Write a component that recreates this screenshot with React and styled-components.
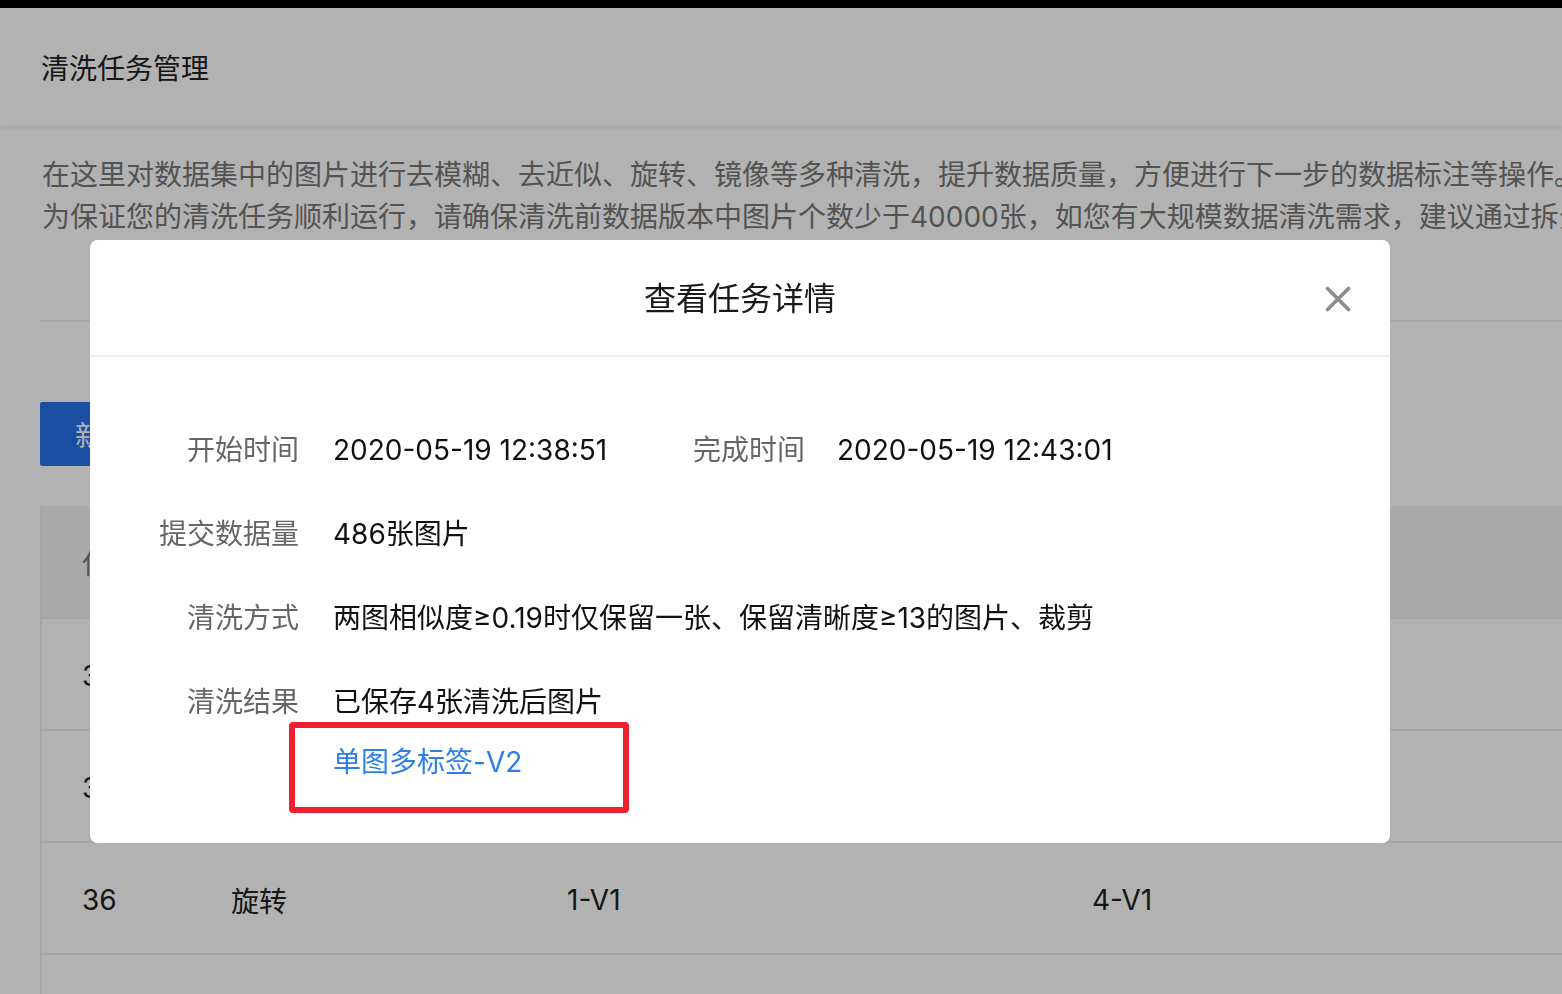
import React from "react";
import styled, { createGlobalStyle } from "styled-components";

const GlobalStyle = createGlobalStyle`
  html, body {
    margin: 0;
    padding: 0;
    background: #fff;
    overflow: hidden;
  }
  body {
    font-family: Inter, "Noto Sans CJK SC", sans-serif;
  }
  * {
    box-sizing: border-box;
  }
`;

const Page = styled.div`
  width: 1562px;
  height: 994px;
  overflow: hidden;
  background: #fff;
`;

const TopBar = styled.div`
  height: 8px;
  background: #000;
`;

const Header = styled.div`
  height: 118px;
  display: flex;
  align-items: center;
  padding-left: 41px;
  background: #fff;
  box-shadow: 0 2px 4px rgba(0, 0, 0, 0.08);
  font-size: 28px;
  color: #222;
`;

const Content = styled.div`
  padding-left: 40px;
`;

const Desc = styled.div`
  margin-top: 28px;
  padding-left: 2px;
  font-size: 28px;
  line-height: 42px;
  color: #777;
  white-space: nowrap;
`;

const Divider = styled.div`
  margin-top: 82px;
  height: 2px;
  background: #f0f0f0;
`;

const PrimaryButton = styled.button`
  margin-top: 80px;
  height: 64px;
  width: 180px;
  padding: 0 0 0 35px;
  border: none;
  border-radius: 2px;
  background: #2671ea;
  color: #fff;
  font-family: inherit;
  font-size: 28px;
  text-align: left;
`;

const Table = styled.div`
  margin-top: 40px;
  border-left: 2px solid #eee;
`;

const Row = styled.div`
  display: grid;
  grid-template-columns: 149px 336px 525px 1fr;
  align-items: center;
  height: ${(p) => (p.$head ? 113 : 112)}px;
  padding: ${(p) => (p.$head ? "0" : "4px")} 0 0 40px;
  border-bottom: 2px solid #ededed;
  background: ${(p) => (p.$head ? "#f3f3f3" : "#fff")};
  color: ${(p) => (p.$head ? "#777" : "#222")};
  font-size: 28px;
  white-space: nowrap;
`;

const Mask = styled.div`
  position: fixed;
  inset: 0;
  background: rgba(0, 0, 0, 0.3);
`;

const ModalLayer = styled.div`
  position: fixed;
  inset: 0;
  display: flex;
  align-items: flex-start;
  padding: 240px 0 0 90px;
`;

const Modal = styled.div`
  width: 1300px;
  background: #fff;
  border-radius: 8px;
  overflow: hidden;
`;

const ModalHeader = styled.div`
  height: 117px;
  display: grid;
  grid-template-columns: 1fr auto 1fr;
  align-items: center;
  border-bottom: 2px solid #eeeeee;
`;

const ModalTitle = styled.div`
  grid-column: 2;
  font-size: 32px;
  color: #1a1a1a;
  margin-top: -4px;
`;

const CloseButton = styled.button`
  grid-column: 3;
  justify-self: end;
  margin-right: 38px;
  margin-top: 2px;
  width: 28px;
  height: 28px;
  padding: 0;
  border: none;
  background: none;
  display: flex;
  align-items: center;
  justify-content: center;
`;

const ModalBody = styled.div`
  padding: 72px 0 60px;
  display: flex;
  flex-direction: column;
  gap: 42px;
`;

const Field = styled.div`
  display: flex;
  align-items: flex-start;
  font-size: 28px;
  line-height: 42px;
  white-space: nowrap;
`;

const Label = styled.div`
  flex-shrink: 0;
  width: ${(p) => p.$w ?? 209}px;
  margin-right: 34px;
  text-align: right;
  color: #666;
`;

const Value = styled.div`
  flex-shrink: 0;
  width: ${(p) => (p.$w ? `${p.$w}px` : "auto")};
  color: #111;
  display: flex;
  flex-direction: column;
`;

const LinkWrap = styled.div`
  position: relative;
  margin-top: 18px;
`;

const ResultLink = styled.a`
  color: #2d7fe8;
  text-decoration: none;
  cursor: pointer;
`;

const Highlight = styled.div`
  position: absolute;
  left: -44px;
  top: -19px;
  width: 340px;
  height: 91px;
  border: 6px solid #f0212e;
  border-radius: 4px;
  pointer-events: none;
`;

const rows = [
  ["38", "去模糊", "3-V1", "5-V1"],
  ["37", "去近似", "2-V1", "5-V1"],
  ["36", "旋转", "1-V1", "4-V1"],
  ["35", "镜像", "1-V1", "3-V1"],
];

function CloseIcon() {
  return (
    <svg width="26" height="26" viewBox="0 0 26 26">
      <path
        d="M2.5 2.5 L23.5 23.5 M23.5 2.5 L2.5 23.5"
        stroke="#8c8c8c"
        strokeWidth="3.6"
        strokeLinecap="round"
      />
    </svg>
  );
}

export default function App() {
  return (
    <Page>
      <GlobalStyle />
      <TopBar />
      <Header>清洗任务管理</Header>
      <Content>
        <Desc>
          在这里对数据集中的图片进行去模糊、去近似、旋转、镜像等多种清洗，提升数据质量，方便进行下一步的数据标注等操作。
          <br />
          为保证您的清洗任务顺利运行，请确保清洗前数据版本中图片个数少于40000张，如您有大规模数据清洗需求，建议通过拆分数据集的方式进行。
        </Desc>
        <Divider />
        <PrimaryButton>新建任务</PrimaryButton>
        <Table>
          <Row $head>
            <span>任务ID</span>
            <span>清洗方式</span>
            <span>清洗前版本</span>
            <span>清洗后版本</span>
          </Row>
          {rows.map((r) => (
            <Row key={r[0]}>
              {r.map((c, i) => (
                <span key={i}>{c}</span>
              ))}
            </Row>
          ))}
        </Table>
      </Content>

      <Mask />
      <ModalLayer>
        <Modal>
          <ModalHeader>
            <ModalTitle>查看任务详情</ModalTitle>
            <CloseButton>
              <CloseIcon />
            </CloseButton>
          </ModalHeader>
          <ModalBody>
            <Field>
              <Label>开始时间</Label>
              <Value $w={360}>2020-05-19 12:38:51</Value>
              <Label $w={110}>完成时间</Label>
              <Value>2020-05-19 12:43:01</Value>
            </Field>
            <Field>
              <Label>提交数据量</Label>
              <Value>486张图片</Value>
            </Field>
            <Field>
              <Label>清洗方式</Label>
              <Value>两图相似度≥0.19时仅保留一张、保留清晰度≥13的图片、裁剪</Value>
            </Field>
            <Field>
              <Label>清洗结果</Label>
              <Value>
                <span>已保存4张清洗后图片</span>
                <LinkWrap>
                  <ResultLink>单图多标签-V2</ResultLink>
                  <Highlight />
                </LinkWrap>
              </Value>
            </Field>
          </ModalBody>
        </Modal>
      </ModalLayer>
    </Page>
  );
}
